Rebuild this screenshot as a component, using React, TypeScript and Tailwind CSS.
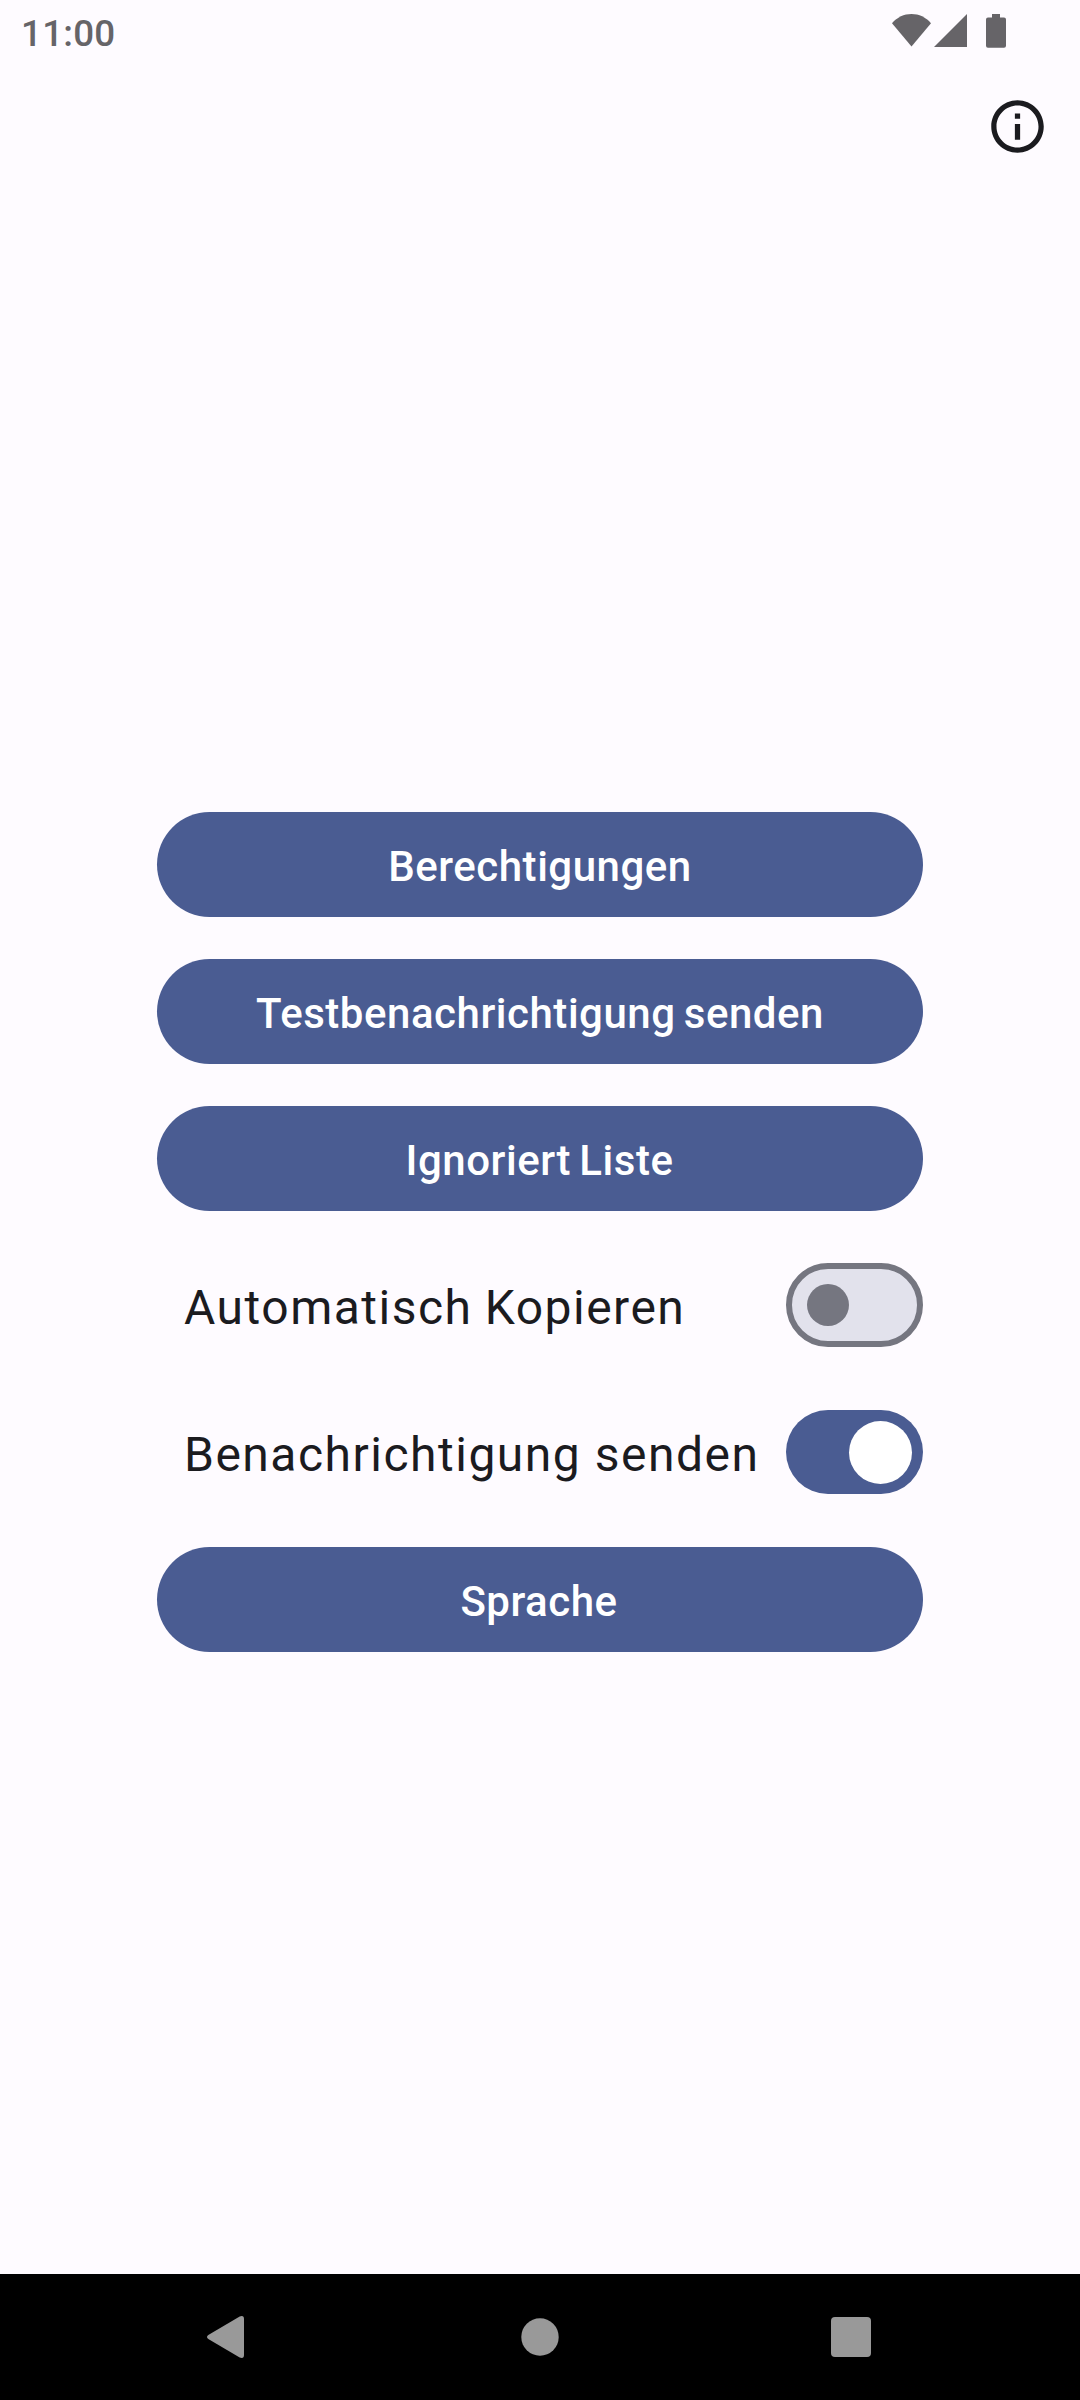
import { useState } from "react";
import clsx from "clsx";

function StatusBar() {
  return (
    <header className="flex h-[63px] items-start justify-between pl-[21px] pr-[74px] text-[#666468]">
      <span className="mt-[12px] text-[36.75px] leading-[43px] font-medium tracking-[0.25px]">11:00</span>
      <div className="mt-[14px] flex">
        <svg className="h-[34px] w-[39px]" viewBox="0 0 39 34" fill="currentColor">
          <path d="M19.5 32.5 0 9.2C5.2 3.2 12 0 19.5 0S33.800 3.200 39 9.200Z" />
        </svg>
        <svg className="ml-[3px] h-[34px] w-[33px]" viewBox="0 0 33 34" fill="currentColor">
          <path d="M0 33 33 0V33Z" />
        </svg>
        <svg className="ml-[19px] h-[34px] w-[20px]" viewBox="0 0 20 34" fill="currentColor">
          <path d="M6 0H14V3.500H18A2 2 0 0 1 20 5.500V31.700A2 2 0 0 1 18 33.700H2A2 2 0 0 1 0 31.700V5.500A2 2 0 0 1 2 3.500H6Z" />
        </svg>
      </div>
    </header>
  );
}

function PillButton({ label, className }: { label: string; className?: string }) {
  return (
    <button
      className={clsx(
        "flex h-[105px] w-full items-center justify-center rounded-full bg-[#4a5c92] pt-[5px] text-[42px] leading-[60px] font-medium tracking-[0.53px] text-white [word-spacing:-2.8px]",
        className,
      )}
    >
      {label}
    </button>
  );
}

function SwitchRow({ label, initial, className }: { label: string; initial: boolean; className?: string }) {
  const [on, setOn] = useState(initial);
  return (
    <div className="flex h-[84px] items-center justify-between pl-[27px]">
      <span
        className={clsx(
          "pt-[6px] text-[48px] leading-[72px] tracking-[1.5px] whitespace-nowrap text-[#1b1b1f]",
          className,
        )}
      >
        {label}
      </span>
      <button
        role="switch"
        aria-checked={on}
        aria-label={label}
        onClick={() => setOn(!on)}
        className={
          on
            ? "flex h-[84px] w-[137px] shrink-0 items-center justify-end rounded-full bg-[#4a5c92] pr-[11px]"
            : "flex h-[84px] w-[137px] shrink-0 items-center rounded-full border-[6px] border-[#757680] bg-[#e2e2ec] pl-[15px]"
        }
      >
        <span className={on ? "size-[63px] rounded-full bg-white" : "size-[42px] rounded-full bg-[#757680]"} />
      </button>
    </div>
  );
}

function NavigationBar() {
  return (
    <nav className="flex h-[126px] items-center bg-black pr-[209px] pl-[207px] text-[#999999]">
      <svg className="h-[42px] w-[37px]" viewBox="0 0 37 42" fill="currentColor">
        <path d="M1.300 19 32.700.5Q37-1 37 3V39Q37 43 32.700 41.500L1.300 23Q-1.300 21 1.300 19Z" />
      </svg>
      <svg className="ml-[277px] size-[38px]" viewBox="0 0 38 38" fill="currentColor">
        <circle cx="19" cy="19" r="18.700" />
      </svg>
      <svg className="ml-auto size-[40px]" viewBox="0 0 40 40" fill="currentColor">
        <rect width="40" height="40" rx="4" />
      </svg>
    </nav>
  );
}

export default function App() {
  return (
    <div className="flex h-[2400px] w-[1080px] flex-col overflow-hidden bg-[#fefbff] font-[Roboto,sans-serif]">
      <StatusBar />
      <div className="flex h-[126px] items-start justify-end pt-[32px] pr-[31px]">
        <button aria-label="Info">
          <svg className="block size-[63px]" viewBox="0 0 24 24" fill="#1b1b1f">
            <path d="M11 7h2v2h-2zm0 4h2v6h-2zm1-9C6.480 2 2 6.480 2 12s4.480 10 10 10 10-4.480 10-10S17.520 2 12 2zm0 18c-4.410 0-8-3.590-8-8s3.590-8 8-8 8 3.590 8 8-3.590 8-8 8z" />
          </svg>
        </button>
      </div>
      <main className="flex flex-1 flex-col px-[157px] pt-[623px]">
        <div className="flex flex-col gap-[42px]">
          <PillButton label="Berechtigungen" />
          <PillButton label="Testbenachrichtigung senden" />
          <PillButton label="Ignoriert Liste" className="pr-px" />
        </div>
        <div className="mt-[52px] mb-[53px] flex flex-col gap-[63px]">
          <SwitchRow label="Automatisch Kopieren" initial={false} className="[word-spacing:-1.3px]" />
          <SwitchRow label="Benachrichtigung senden" initial={true} />
        </div>
        <PillButton label="Sprache" className="pr-[2px]" />
      </main>
      <NavigationBar />
    </div>
  );
}
